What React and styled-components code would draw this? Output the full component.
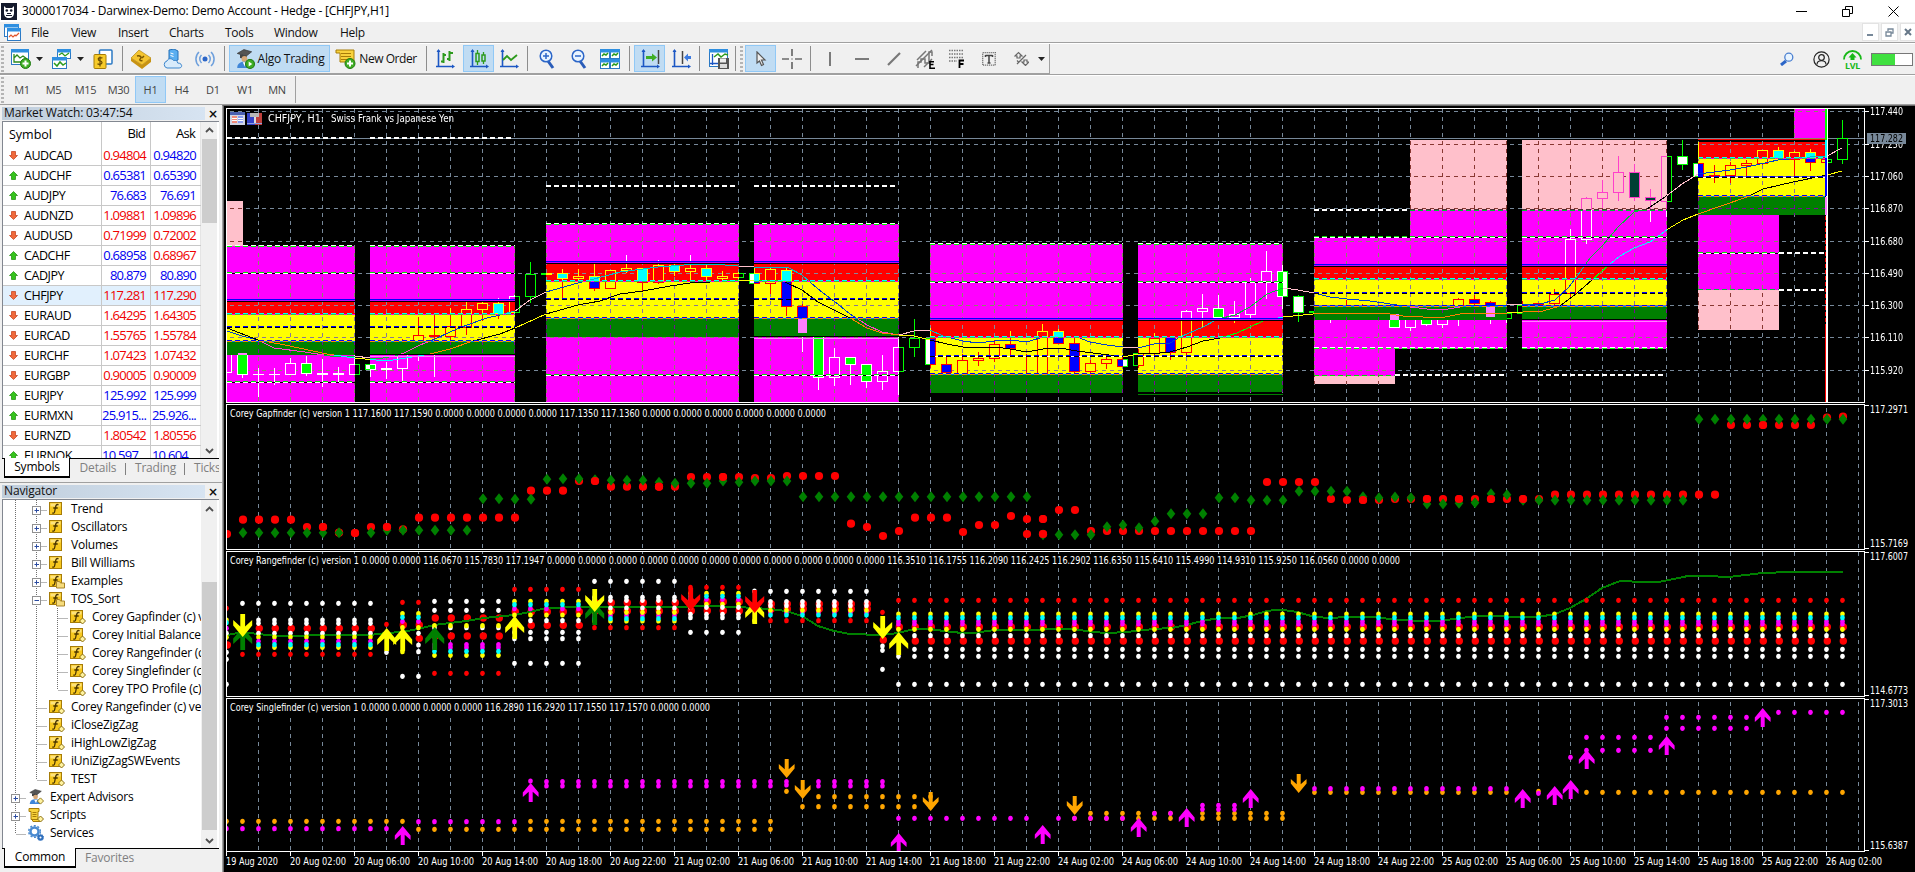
import React from 'react';
import styled, { createGlobalStyle, css } from 'styled-components';

const GlobalStyle = createGlobalStyle`
  html, body { margin: 0; padding: 0; background: #f0f0f0; overflow: hidden; }
  * { box-sizing: border-box; }
`;

const Shell = styled.div`
  width: 1915px;
  height: 872px;
  display: flex;
  flex-direction: column;
  background: #f0f0f0;
  color: #111;
  font-family: "Open Sans", "Noto Sans", sans-serif;
  font-size: 12px;
  overflow: hidden;
`;

/* ---------- window chrome ---------- */
const TitleBar = styled.div`
  height: 22px;
  flex: none;
  background: #fff;
  display: flex;
  align-items: center;
  padding-left: 1px;
`;
const TitleText = styled.div`
  margin-left: 5px;
  font-size: 12px;
  line-height: 20px;
  color: #000;
  letter-spacing: -0.22px;
  white-space: nowrap;
`;
const WindowControls = styled.div`
  margin-left: auto;
  display: flex;
  align-items: center;
  gap: 35px;
  padding-right: 16px;
  height: 18px;
`;
const MenuBar = styled.div`
  height: 21px;
  flex: none;
  display: flex;
  align-items: center;
  border-bottom: 1px solid #a0a0a0;
  padding-left: 3px;
`;
const MenuItem = styled.div`
  width: ${(p) => p.$w}px;
  line-height: 19px;
  white-space: nowrap;
  letter-spacing: -0.3px;
`;
const MdiControls = styled.div`
  margin-left: auto;
  display: flex;
  gap: 2px;
  height: 18px;
`;
const MdiButton = styled.div`
  width: 17px;
  height: 18px;
  background: #fff;
  border: 1px solid #e3e3e3;
  display: flex;
  align-items: center;
  justify-content: center;
  &:last-child { width: 15px; border-right: 0; }
`;
const Toolbar = styled.div`
  height: ${(p) => p.$h}px;
  flex: none;
  display: flex;
  align-items: ${(p) => (p.$top ? 'flex-start' : 'center')};
  border-top: 1px solid #fff;
  border-bottom: 1px solid #a0a0a0;
`;
const ToolGroup = styled.div`
  height: ${(p) => p.$h || 30}px;
  display: flex;
  align-items: center;
  border-right: 1px solid #a0a0a0;
  border-bottom: ${(p) => (p.$line ? '1px solid #a0a0a0' : '0')};
`;
const Grip = styled.div`
  width: 3px;
  height: 26px;
  flex: none;
  margin-left: ${(p) => p.$ml || 1}px;
  background: repeating-linear-gradient(#b4b4b4 0 2px, #f0f0f0 2px 4px);
`;
const Tool = styled.div`
  width: ${(p) => p.$w || 32}px;
  height: 27px;
  flex: none;
  display: flex;
  align-items: center;
  justify-content: center;
  margin-left: ${(p) => p.$ml || 0}px;
  gap: 3px;
  white-space: nowrap;
  letter-spacing: ${(p) => p.$ls || -0.25}px;
  ${(p) => p.$on && css`
    background: #c0dcf3;
    border: 1px solid #90c8f6;
  `}
`;
const Sep = styled.div`
  width: 1px;
  height: 25px;
  flex: none;
  margin-left: ${(p) => p.$ml || 0}px;
  background: #8d8d8d;
`;
const Period = styled(Tool)`
  color: #444;
  font-size: 11px;
`;
const Status = styled.div`
  margin-left: auto;
  display: flex;
  align-items: center;
  padding-right: 2px;
`;
const Battery = styled.div`
  width: 42px;
  height: 13px;
  margin-left: 9px;
  border: 1px solid #777;
  background: linear-gradient(90deg, #40e040 0 57%, #fff 57%);
`;

/* ---------- side panels ---------- */
const Body = styled.div`
  flex: 1;
  display: flex;
  min-height: 0;
`;
const Side = styled.div`
  width: 222px;
  flex: none;
  padding: 2px 0 0 2px;
  display: flex;
  flex-direction: column;
`;
const PanelHead = styled.div`
  width: 218px;
  height: ${(p) => p.$h}px;
  flex: none;
  display: flex;
  justify-content: space-between;
  align-items: flex-start;
`;
const PanelTitle = styled.div`
  width: 203px;
  height: 13px;
  line-height: 12px;
  padding-left: 2px;
  background: linear-gradient(90deg, #bfcddb, #d7e4f2);
  letter-spacing: -0.15px;
  white-space: nowrap;
`;
const CloseX = styled.div`
  width: 12px;
  font: bold 12px/14px "DejaVu Sans", sans-serif;
`;
const ListBox = styled.div`
  width: 217px;
  height: ${(p) => p.$h}px;
  flex: none;
  display: flex;
  background: #fff;
  border-left: 1px solid #828790;
  border-top: 1px solid #828790;
`;
const Rows = styled.div`
  width: 198px;
  height: 100%;
  overflow: hidden;
`;
const Scroll = styled.div`
  width: 16px;
  height: 100%;
  display: flex;
  flex-direction: column;
  align-items: center;
  justify-content: space-between;
  background: #f0f0f0;
  padding-top: ${(p) => p.$pt || 5}px;
  padding-bottom: 4px;
`;
const Thumb = styled.div`
  width: 15px;
  height: ${(p) => p.$h}px;
  margin-top: ${(p) => p.$mt}px;
  margin-bottom: auto;
  background: #cdcdcd;
`;
const QuoteRow = styled.div`
  display: grid;
  grid-template-columns: 99px 49px 50px;
  height: ${(p) => (p.$head ? 24 : 20)}px;
  line-height: ${(p) => (p.$head ? 23 : 19)}px;
  font-size: 13px;
  background: ${(p) => (p.$sel ? '#e1f0fd' : '#fff')};
  border-bottom: ${(p) => (p.$head ? '0' : '1px solid #c8c8c8')};
`;
const SymbolCell = styled.div`
  display: flex;
  align-items: center;
  padding-left: 6px;
  gap: 6px;
  border-right: 1px solid #c8c8c8;
  font-size: 12.5px;
  letter-spacing: ${(p) => (p.$head ? 0 : -0.45)}px;
  color: #000;
`;
const PriceCell = styled.div`
  text-align: right;
  padding-right: ${(p) => p.$pr || 4}px;
  border-right: 1px solid ${(p) => (p.$edge ? '#e5e5e5' : '#c8c8c8')};
  color: ${(p) => p.$c || '#000'};
  letter-spacing: -0.75px;
  white-space: nowrap;
`;
const Tabs = styled.div`
  width: 217px;
  height: 20px;
  flex: none;
  display: flex;
  overflow: hidden;
  font-size: 12px;
  letter-spacing: -0.2px;
  line-height: 18px;
  color: #808080;
`;
const Lead = styled.div`
  width: ${(p) => p.$w || 2}px;
  border-top: 1px solid #000;
  flex: ${(p) => (p.$grow ? 1 : 'none')};
`;
const Tab = styled.div`
  width: ${(p) => p.$w}px;
  flex: none;
  text-align: center;
  white-space: nowrap;
  overflow: hidden;
  ${(p) => p.$on ? css`
    background: #fff;
    color: #000;
    border: 1px solid #000;
    border-top: 0;
    border-bottom-width: 2px;
  ` : css`
    border-top: 1px solid #000;
    text-align: ${p.$cut ? 'left' : 'center'};
    padding-left: ${p.$cut ? 9 : 0}px;
    background: ${p.$bar ? 'linear-gradient(#808080,#808080) right center / 1px 12px no-repeat' : 'none'};
  `}
`;
const Splitter = styled.div`
  height: 7px;
  flex: none;
  margin-left: -2px;
  background: linear-gradient(#f0f0f0 4px, #a0a0a0 4px 5px, #f0f0f0 5px);
`;
const TreeRow = styled.div`
  height: 18px;
  display: flex;
  align-items: center;
  color: #000;
  white-space: nowrap;
  font-size: 12px;
  letter-spacing: -0.22px;
  > svg { flex: none; }
`;
const TreeLabel = styled.span`
  flex: none;
  margin: -1px 0 0 6px;
  line-height: 17px;
`;

/* ---------- chart ---------- */
const ChartWindow = styled.div`
  flex: 1;
  min-width: 0;
  display: flex;
  flex-direction: column;
  background: #000;
  border-left: 1px solid #a0a0a0;
  border-top: 1px solid #696969;
  box-shadow: inset 1px 0 0 #696969;
  padding-left: 1px;
`;
const Plot = styled.svg`
  display: block;
  width: 1691px;
  height: ${(p) => p.$h}px;
  flex: none;
  shape-rendering: crispEdges;
  font-family: "DejaVu Sans Condensed", "DejaVu Sans", sans-serif;
  font-size: 10.5px;
  isolation: isolate;
`;
const Difference = styled.g`
  mix-blend-mode: difference;
`;
const Smooth = styled.g`
  shape-rendering: geometricPrecision;
`;

const M = '#ff00ff', R = '#ff0000', Y = '#ffff00', G = '#008000', P = '#ffc0cb', SLATE = '#778899';
const bx = (i) => 226 + 16 * i;

const HGRID = [[111, '117.440'], [144, '117.250'], [176, '117.060'], [208, '116.870'], [241, '116.680'], [273, '116.490'], [305, '116.300'], [337, '116.110'], [370, '115.920']];

// high, top, bottom, low, falling
const CANDLES = [
  [350, 352, 372, 372, 0], [352, 352, 374, 377, 1], [368, 374, 374, 396, 0], [368, 374, 374, 384, 0], [358, 363, 374, 374, 0],
  [356, 363, 373, 375, 1], [359, 373, 374, 386, 0], [367, 373, 374, 382, 0], [355, 364, 374, 374, 0], [364, 364, 369, 376, 1],
  [362, 368, 369, 378, 0], [339, 345, 368, 382, 0], [317, 335, 352, 360, 0], [313, 335, 336, 376, 0], [308, 326, 336, 339, 0],
  [302, 309, 327, 334, 0], [302, 303, 309, 320, 0], [298, 303, 313, 318, 1], [295, 296, 312, 313, 0], [262, 274, 296, 302, 0],
  [274, 273, 274, 274, 0], [269, 273, 278, 297, 1], [269, 276, 278, 280, 0], [263, 276, 288, 290, 1], [270, 270, 288, 288, 0],
  [255, 268, 270, 272, 0], [268, 268, 282, 291, 1], [260, 265, 282, 283, 0], [264, 265, 271, 275, 1], [255, 268, 271, 281, 0],
  [264, 268, 276, 281, 1], [271, 276, 278, 281, 0], [272, 273, 277, 278, 0], [267, 273, 283, 283, 1], [267, 269, 283, 293, 0],
  [268, 270, 306, 315, 1], [304, 306, 333, 351, 1], [335, 335, 377, 389, 1], [348, 357, 377, 385, 0], [357, 357, 364, 384, 1],
  [364, 364, 381, 387, 1], [355, 371, 381, 389, 0], [334, 347, 371, 394, 0], [319, 338, 347, 356, 0], [328, 338, 364, 367, 1],
  [355, 364, 372, 374, 1], [354, 360, 374, 375, 0], [352, 358, 360, 365, 0], [340, 344, 358, 361, 0], [331, 344, 348, 355, 1],
  [354, 375, 378, 380, 0], [324, 331, 375, 375, 0], [329, 331, 343, 343, 1], [337, 343, 371, 374, 1], [360, 363, 371, 374, 0],
  [355, 359, 363, 368, 0], [355, 359, 366, 366, 1], [349, 353, 365, 367, 0], [333, 338, 353, 356, 0], [336, 337, 352, 359, 1],
  [310, 311, 352, 354, 0], [294, 308, 311, 327, 0], [295, 308, 317, 318, 1], [301, 314, 317, 322, 0], [278, 282, 314, 318, 0],
  [251, 271, 281, 298, 0], [265, 271, 296, 308, 1], [295, 296, 312, 321, 1], [311, 311, 312, 312, 1], [312, 314, 316, 322, 0],
  [300, 310, 314, 314, 0], [304, 309, 310, 311, 1], [310, 311, 313, 316, 0], [313, 313, 327, 327, 1], [316, 317, 327, 330, 0],
  [316, 319, 324, 325, 1], [316, 319, 324, 327, 0], [298, 299, 318, 325, 0], [295, 299, 303, 305, 1], [301, 302, 317, 323, 1],
  [312, 313, 318, 322, 0], [301, 305, 313, 313, 0], [303, 303, 304, 305, 0], [289, 294, 303, 306, 0], [229, 239, 293, 298, 0],
  [197, 198, 239, 243, 0], [180, 192, 198, 207, 0], [156, 172, 192, 200, 0], [164, 172, 197, 200, 1], [189, 197, 200, 221, 1],
  [156, 156, 201, 216, 0], [140, 156, 164, 169, 1], [163, 163, 176, 176, 1], [165, 175, 176, 182, 0], [162, 165, 175, 182, 0],
  [160, 163, 165, 177, 0], [150, 150, 163, 164, 0], [147, 150, 158, 159, 1], [151, 152, 159, 176, 0], [149, 152, 162, 170, 1],
  [159, 159, 162, 163, 0], [120, 138, 159, 163, 0],
];

const FAST = '227,331 242,336 258,340 274,348 305,352 330,356 355,356 370,358 383,358 395,356 404,353 420,345 435,339 450,332 467,325 487,318 500,315 515,311 530,300 546,292 578,283 590,280 620,272 658,267 697,264 712,264 738,266 754,267 787,267 802,275 818,289 834,301 850,314 867,325 882,332 899,335 914,331 930,330 943,336 963,341 978,343 995,341 1010,340 1027,342 1043,337 1060,337 1077,337 1090,342 1107,345 1123,347 1138,348 1154,344 1170,343 1180,337 1203,327 1218,319 1235,315 1250,307 1267,294 1283,288 1298,290 1314,293 1330,297 1347,299 1370,301 1397,305 1410,307 1427,309 1442,310 1460,307 1473,305 1507,305 1523,304 1540,304 1555,300 1569,287 1583,268 1590,258 1603,245 1618,227 1634,212 1647,209 1665,197 1682,184 1698,174 1730,170 1747,167 1778,160 1810,157 1827,156 1842,148';
const SLOW = '227,328 258,340 285,345 327,354 354,358 387,361 412,357 430,354 450,349 473,341 500,334 515,328 546,314 578,305 600,301 620,294 643,291 670,286 697,282 710,282 738,280 780,280 787,283 802,290 818,302 834,310 850,318 867,328 882,333 899,335 914,336 930,340 947,344 963,347 983,348 995,347 1010,349 1027,352 1043,349 1060,348 1077,351 1093,353 1117,356 1128,356 1138,354 1160,353 1170,352 1187,347 1203,341 1220,338 1237,333 1250,327 1263,321 1283,317 1313,314 1340,313 1383,313 1403,316 1423,317 1445,317 1460,314 1473,313 1507,313 1523,312 1543,311 1560,306 1577,293 1600,273 1610,264 1620,256 1634,248 1650,242 1668,229 1683,220 1698,214 1747,197 1763,189 1793,182 1827,175 1842,171';
const RANGE_MA = '227,635 243,632 258,634 277,636 338,635 370,635 386,633 402,632 418,629 434,625 466,621 484,618 514,615 530,612 546,608 578,607 674,607 706,606 738,607 770,609 786,611 802,616 818,626 834,631 850,634 882,635 898,633 914,629 930,629 944,631 962,633 978,632.5 994,630 1028,630 1058,629 1074,629 1092,632 1108,633 1127,632 1154,629 1171,628 1187,625 1202,621 1219,618 1238,618 1253,615 1267,611 1280,609.5 1297,612 1315,617 1330,618 1346,617 1377,617 1395,620 1413,620.5 1443,620.5 1476,616 1538,617 1555,614 1570,608 1586,599 1602,588 1620,581 1644,582 1659,582 1688,576 1707,576 1729,577 1762,573 1791,572 1843,572';

// [x1, x2, y1, y2, colour]
const ladder = (x1, x2, ys, cols) => cols.map((c, k) => [x1, x2, ys[k], ys[k + 1], c]);
const STD = [M, R, Y, G, M];
const A_Y = [246, 302, 314, 341, 355, 402], B_Y = [224, 263, 281, 318, 337, 402], C_Y = [244, 321, 337, 374, 393], D_Y = [237, 267, 279, 306, 320, 349];
const ZONES = [
  [227, 243, 201, 246, P],
  ...ladder(227, 355, A_Y, STD), ...ladder(370, 515, A_Y, STD),
  ...ladder(546, 739, B_Y, STD), ...ladder(754, 899, B_Y, STD),
  ...ladder(930, 1123, C_Y, [M, R, Y, G]), ...ladder(1138, 1283, [244, 321, 337, 374, 392], [M, R, Y, G]),
  [1410, 1507, 140, 210, P], [1410, 1507, 210, 237, M], [1522, 1667, 140, 210, P], [1522, 1667, 210, 237, M],
  ...ladder(1314, 1507, D_Y, STD), ...ladder(1522, 1667, D_Y, STD),
  [1314, 1395, 349, 376, M], [1314, 1395, 376, 384, P],
  [1698, 1825, 142, 158, R], [1698, 1825, 158, 197, Y], [1698, 1825, 197, 215, G],
  [1698, 1779, 215, 290, M], [1698, 1779, 290, 330, P], [1794, 1826, 109, 140, M],
];

const SPANS = { a: [[227, 355], [370, 515]], b: [[546, 739], [754, 899]], c: [[930, 1123], [1138, 1283]], d: [[1314, 1507], [1522, 1667]], e: [[1698, 1825]] };
const RULES = [
  ['a', 246, 'edge'], ['a', 273, 'mid'], ['a', 300, 'top'], ['a', 314, 'cyan'], ['a', 327, 'blue'], ['a', 341, 'low'], ['a', 382, 'mid'],
  ['b', 224, 'edge'], ['b', 262, 'top'], ['b', 281, 'cyan'], ['b', 299, 'blue'], ['b', 318, 'low'], ['b', 375, 'mid'],
  ['c', 244, 'edge'], ['c', 282, 'mid'], ['c', 319, 'top'], ['c', 337, 'cyan'], ['c', 356, 'blueWhite'], ['c', 374, 'low'],
  ['d', 237, 'mid'], ['d', 265, 'top'], ['d', 279, 'cyan'], ['d', 293, 'blue'], ['d', 306, 'low'], ['d', 348, 'edge'],
  ['e', 158, 'cyan'], ['e', 177, 'blueWhite'], ['e', 196, 'low'],
];
// each rule is a stack of 1px rows: [dy, base colour, dash colour]
const RULE_ROWS = {
  edge: [[-1, null, '#fff'], [0, null, '#00ff00']],
  mid: [[-1, null, '#00e000'], [0, '#000', '#fff']],
  top: [[-1, '#0000ff', null], [0, '#c000ff', null], [1, '#000', null]],
  cyan: [[-1, null, '#00ffff'], [0, '#ff00ff', '#40c040']],
  blue: [[-1, null, '#0000ff'], [0, null, '#000']],
  blueWhite: [[-1, null, '#0000ff'], [0, '#fff', '#000']],
  low: [[-1, null, '#0000ff'], [0, '#0080ff', '#ff9000']],
};
const WHITE_DASH = [[227, 353, 137], [370, 512, 137], [546, 736, 185], [754, 896, 185], [1314, 1408, 209], [1395, 1504, 374], [1522, 1664, 374], [1779, 1825, 252], [1779, 1825, 289]];

function Row({ x1, x2, y, color, dash, h = 1 }) {
  return <line x1={x1} x2={x2} y1={y + h / 2} y2={y + h / 2} stroke={color} strokeWidth={h} strokeDasharray={dash ? '5 3' : undefined} />;
}

function Frame({ top, bottom }) {
  return (
    <g fill="#fff">
      <rect x="226" y={top} width="1639" height="1" />
      <rect x="226" y={bottom} width="1639" height="1" />
      <rect x="226" y={top} width="1" height={bottom - top} />
      <rect x="1864" y={top} width="1" height={bottom - top} />
    </g>
  );
}
function VGrid({ top, bottom }) {
  return Array.from({ length: 51 }, (_, k) => (
    <line key={k} x1={258.5 + 32 * k} x2={258.5 + 32 * k} y1={top} y2={bottom} stroke={SLATE} strokeDasharray="4 4" />
  ));
}
function Label({ x, y, w, children, fill = '#fff' }) {
  return <text x={x} y={y} fill={fill} textLength={w} lengthAdjust="spacingAndGlyphs">{children}</text>;
}
function Candle({ i, d }) {
  const [hi, top, bot, lo, fall] = d;
  const x = bx(i);
  return (
    <g>
      <rect x={x} y={hi} width="1" height={lo - hi + 1} fill="#00ff00" />
      <rect x={x - 5} y={top} width="11" height={bot - top + 1} fill="#00ff00" />
      {bot - top > 1 && <rect x={x - 4} y={top + 1} width="9" height={bot - top - 1} fill={fall ? '#fff' : '#000'} />}
    </g>
  );
}

function PricePanel() {
  return (
    <Plot $h={297} viewBox="224 106 1691 297">
      <defs><clipPath id="price"><rect x="227" y="109" width="1637" height="293" /></clipPath></defs>
      <rect x="224" y="106" width="1691" height="297" fill="#000" />
      <g clipPath="url(#price)">
        <VGrid top={109} bottom={402} />
        {HGRID.map(([y]) => <line key={y} x1="226" x2="1864" y1={y + 0.5} y2={y + 0.5} stroke={SLATE} strokeDasharray="4 4" strokeDashoffset="4" />)}
        <rect x="227" y="138" width="1637" height="1" fill={SLATE} />
        {CANDLES.map((d, i) => <Candle key={i} i={i} d={d} />)}
        <polyline points={FAST} fill="none" stroke={P} />
        <polyline points={SLOW} fill="none" stroke={Y} />
      </g>
      <Difference>
        {ZONES.map(([x1, x2, y1, y2, c], k) => <rect key={k} x={x1} y={y1} width={x2 - x1} height={y2 - y1} fill={c} />)}
      </Difference>
      {RULES.map(([s, y, kind]) => SPANS[s].map(([x1, x2]) => RULE_ROWS[kind].map(([dy, base, dash]) => (
        <g key={`${s}${y}${x1}${dy}`}>
          {base && <Row x1={x1} x2={x2} y={y + dy} color={base} />}
          {dash && <Row x1={x1} x2={x2} y={y + dy} color={dash} dash />}
        </g>
      ))))}
      {WHITE_DASH.map(([x1, x2, y]) => <Row key={`${x1}-${y}`} x1={x1} x2={x2} y={y} color="#fff" dash h={2} />)}
      {[[1410, 1507], [1522, 1667]].map(([x1, x2]) => (
        <g key={x1}>
          <Row x1={x1} x2={x2} y={209} color="#4d3035" dash />
          <Row x1={x1} x2={x2} y={210} color="#00c034" dash />
        </g>
      ))}
      {[[370, 515, 354], [754, 899, 336], [1522, 1667, 319]].map(([x1, x2, y]) => (
        <g key={x1}><Row x1={x1} x2={x2} y={y} color="#000" /><Row x1={x1} x2={x2} y={y + 2} color="#ff80ff" /></g>
      ))}
      <Row x1={1138} x2={1283} y={394} color={G} />
      <Row x1={1314} x2={1395} y={375} color="#00e000" dash />
      <Row x1={1698} x2={1779} y={252} color="#00e000" dash />
      <Row x1={1698} x2={1779} y={253} color="#000" />
      <Row x1={1698} x2={1779} y={253} color="#fff" dash />
      <Row x1={1698} x2={1779} y={289} color="#00c034" dash />
      <Row x1={1698} x2={1825} y={139} color={R} />
      <rect x="1698" y="142" width="1" height="17" fill={Y} />
      <rect x="1826" y="109" width="2" height="293" fill="#fff" />
      <rect x="1825" y="109" width="2" height="31" fill="#00ff00" />
      <rect x="1825" y="140" width="2" height="18" fill="#00ffff" />
      <rect x="1825" y="158" width="2" height="38" fill="#0000ff" />
      <rect x="1825" y="197" width="2" height="18" fill="#ff80ff" />
      <line x1="1825.5" x2="1825.5" y1="216" y2="327" stroke={R} strokeDasharray="4 2" />
      <rect x="1825" y="327" width="1" height="75" fill={R} />
      <Frame top={108} bottom={402} />
      {HGRID.map(([y, t]) => (
        <g key={t}>
          <rect x="1865" y={y} width="4" height="1" fill="#fff" />
          <Label x={1870} y={y + 4} w={33}>{t}</Label>
        </g>
      ))}
      <rect x="1867" y="133" width="39" height="11" fill={SLATE} />
      <Label x={1870} y={142} w={33} fill="#000">117.282</Label>
      <g>
        <rect x="230" y="112" width="15" height="13" fill="#cfd4e4" />
        <rect x="230" y="112" width="15" height="3" fill="#4a5fb0" />
        <rect x="232" y="116" width="5" height="7" fill="#f08a7a" /><rect x="238" y="116" width="5" height="7" fill="#8a9cf0" />
        <path d="M232 118.5h5M232 120.5h5M238 118.5h5M238 120.5h5" stroke="#fff" />
        <rect x="247" y="113" width="8" height="12" fill="#3443c8" /><rect x="255" y="113" width="7" height="12" fill="#c0403c" />
        <rect x="250" y="113" width="9" height="4" fill="#b8b8b8" /><rect x="254" y="117" width="2" height="6" fill="#ddd" />
        <rect x="247" y="123" width="15" height="1" fill="#90a0e0" />
      </g>
      <Label x={268} y={122} w={56}>CHFJPY, H1:</Label>
      <Label x={331} y={122} w={123}>Swiss Frank vs Japanese Yen</Label>
    </Plot>
  );
}

/* expands [[from, to, value], ...] into [index, y] pairs; values are thirds of a pixel below the base line */
const runs = (base, list) => list.flatMap(([a, b, v]) => Array.from({ length: b - a + 1 }, (_, k) => [a + k, base + v / 3]));
const RED = runs(400, [[0, 0, 402], [1, 4, 359], [5, 6, 381], [7, 7, 398], [8, 8, 399], [9, 10, 381], [11, 11, 388], [12, 18, 353], [19, 21, 272], [22, 23, 243], [24, 28, 260], [29, 32, 231], [33, 34, 234], [35, 38, 228], [39, 39, 371], [40, 40, 381], [41, 41, 408], [42, 42, 393], [43, 45, 353], [46, 46, 396], [47, 48, 375], [49, 49, 348], [50, 51, 357], [50, 51, 402], [52, 53, 330], [54, 64, 393], [65, 68, 246], [69, 69, 297], [70, 72, 300], [73, 82, 297], [83, 93, 284], [94, 99, 75], [100, 100, 53], [101, 101, 50]]);
const GREEN = runs(400, [[1, 7, 398], [9, 9, 398], [10, 15, 391], [16, 17, 296], [18, 19, 298], [20, 20, 238], [21, 22, 236], [23, 23, 239], [24, 26, 241], [27, 27, 247], [28, 30, 250], [31, 31, 243], [32, 32, 247], [33, 35, 243], [36, 50, 290], [51, 54, 404], [55, 55, 380], [56, 56, 375], [57, 57, 383], [58, 58, 364], [59, 61, 341], [62, 63, 293], [64, 66, 301], [67, 70, 274], [71, 71, 290], [72, 72, 293], [73, 73, 291], [74, 74, 293], [75, 76, 312], [77, 77, 310], [78, 78, 308], [79, 79, 281], [80, 80, 284], [81, 91, 301], [92, 101, 58]]);
const RED_FRONT = new Set([6, 8, 10, 23, 27, 31, 51, 71, 75, 77, 79, 81, 96]);

const Ball = ({ i, y }) => <circle cx={bx(i) + 1} cy={y} r="4.1" fill={R} />;
const Gem = ({ i, y }) => { const x = bx(i) + 1; return <path d={`M${x} ${y - 5.5}L${x + 4.3} ${y}L${x} ${y + 5.5}L${x - 4.3} ${y}Z`} fill={G} />; };

const zeros = (n) => Array(n).fill('0.0000').join(' ');

function PanelTitleText({ y, w, children }) {
  return (
    <g>
      <rect x="228" y={y - 10} width={w + 4} height="14" fill="#000" />
      <Label x={230} y={y} w={w}>{children}</Label>
    </g>
  );
}
function AxisPair({ top, bottom, hi, lo }) {
  return (
    <g>
      <rect x="1865" y={top + 1} width="4" height="1" fill="#fff" /><rect x="1865" y={bottom - 1} width="4" height="1" fill="#fff" />
      <Label x={1870} y={top + 9} w={38}>{hi}</Label>
      <Label x={1870} y={bottom - 2} w={38}>{lo}</Label>
    </g>
  );
}

function GapPanel() {
  return (
    <Plot $h={147} viewBox="224 403 1691 147">
      <defs><clipPath id="gap"><rect x="227" y="405" width="1637" height="144" /></clipPath></defs>
      <g clipPath="url(#gap)">
        <VGrid top={408} bottom={549} />
        <Smooth>
          {RED.map(([i, y], k) => <Ball key={k} i={i} y={y} />)}
          {GREEN.map(([i, y], k) => <Gem key={k} i={i} y={y} />)}
          {RED.filter(([i]) => RED_FRONT.has(i)).map(([i, y], k) => <Ball key={k} i={i} y={y} />)}
        </Smooth>
        <PanelTitleText y={417} w={596}>{`Corey Gapfinder (c) version 1 117.1600 117.1590 ${zeros(4)} 117.1350 117.1360 ${zeros(6)}`}</PanelTitleText>
      </g>
      <Frame top={404} bottom={549} />
      <AxisPair top={404} bottom={549} hi="117.2971" lo="115.7169" />
    </Plot>
  );
}

const W = '#fff', C = '#00ffff';
// [from, to, [[y, colour, large]]] with y in thirds of a pixel below 400
const STACKS = [
  [0, 0, [[625, R], [660, Y], [668, C], [685, M], [700, W], [712, Y], [735, R, 1], [757, W], [778, W], [853, W]]],
  [1, 1, [[610, W], [763, R]]],
  [2, 9, [[610, W], [660, W], [685, R, 1], [670, W], [700, W], [711, Y], [724, M], [742, Y], [734, C], [763, R]]],
  [10, 10, [[673, R], [757, W]]],
  [11, 12, [[607, R], [641, Y], [675, R, 1], [664, M], [652, C], [683, Y]]],
  [11, 11, [[755, Y], [829, W]]],
  [12, 12, [[700, W], [715, R, 1], [735, W], [755, W], [829, W]]],
  [13, 17, [[497, W], [604, W], [631, W], [654, R, 1], [683, W], [677, Y], [708, R, 1], [734, M], [743, M], [766, Y], [754, C], [820, R]]],
  [18, 22, [[568, R], [604, Y], [635, R, 1], [626, M], [614, C], [645, Y], [662, W], [676, R, 1], [697, W], [716, W], [790, W]]],
  [23, 28, [[544, W], [608, R, 1], [592, W], [601, W], [633, R, 1], [624, W], [647, M], [637, Y], [663, Y], [656, C], [683, R]]],
  [29, 32, [[562, R], [580, Y], [605, R, 1], [598, M], [589, C], [632, R, 1], [613, Y], [622, W], [643, W], [653, W], [697, W]]],
  [33, 33, [[573, W], [662, Y]]],
  [34, 40, [[574, W], [612, R, 1], [627, R, 1], [605, W], [617, W], [638, M], [631, Y], [645, C], [662, R]]],
  [41, 41, [[637, R], [720, R, 1], [738, W], [751, W], [808, W]]],
  [42, 42, [[601, R], [642, Y], [681, R, 1], [664, M], [672, M], [653, C], [688, Y], [769, W], [853, W]]],
  [43, 101, [[601, R], [642, Y], [681, R, 1], [664, M], [672, M], [653, C], [688, Y], [707, W], [723, R, 1], [748, W], [769, W], [853, W]]],
];
const arrowPath = (s) => `M0 0L${9.5 * s} ${11.5 * s}V${17 * s}L${2.4 * s} ${10.5 * s}V${23 * s}H${-2.4 * s}V${10.5 * s}L${-9.5 * s} ${17 * s}V${11.5 * s}Z`;
const Arrow = ({ i, y, c, down, s = 1 }) => (
  <path d={arrowPath(s)} fill={c} transform={`translate(${bx(i) + 0.7} ${y}) scale(1 ${down ? -1 : 1})`} />
);
const Dot = ({ i, y, c }) => <ellipse cx={bx(i) + 0.5} cy={y} rx="2.3" ry="2.6" fill={c} />;

function RangePanel() {
  return (
    <Plot $h={147} viewBox="224 550 1691 147">
      <defs><clipPath id="range"><rect x="227" y="552" width="1637" height="144" /></clipPath></defs>
      <g clipPath="url(#range)">
        <VGrid top={552} bottom={696} />
        <Smooth>
          {STACKS.map(([a, b, dots]) => Array.from({ length: b - a + 1 }, (_, k) => dots.filter((d) => d[2]).map(([y, c], n) => (
            <circle key={`${a}-${k}-${n}`} cx={bx(a + k) + 1.3} cy={400 + y / 3} r="3.7" fill={c} />
          ))))}
        </Smooth>
        <polyline points={RANGE_MA} fill="none" stroke={G} strokeWidth="2" />
        <Smooth>
          {STACKS.map(([a, b, dots]) => Array.from({ length: b - a + 1 }, (_, k) => dots.filter((d) => !d[2]).map(([y, c], n) => (
            <Dot key={`${a}-${k}-${n}`} i={a + k} y={400 + y / 3} c={c} />
          ))))}
          <Arrow i={1} y={627} c={G} /><Arrow i={1} y={637} c={Y} down />
          <Arrow i={10} y={628} c={Y} /><Arrow i={11} y={628} c={Y} />
          <Arrow i={13} y={627} c={G} /><Arrow i={18} y={616} c={Y} />
          <Arrow i={23} y={602} c={G} /><Arrow i={23} y={612} c={Y} down />
          <Arrow i={29} y={611} c={R} down /><Arrow i={33} y={601} c={Y} /><Arrow i={33} y={613} c={R} down />
          <Arrow i={41} y={639} c={Y} down /><Arrow i={42} y={632} c={Y} />
        </Smooth>
        <PanelTitleText y={564} w={1170}>{`Corey Rangefinder (c) version 1 0.0000 0.0000 116.0670 115.7830 117.1947 ${zeros(11)} 116.3510 116.1755 116.2090 116.2425 116.2902 116.6350 115.6410 115.4990 114.9310 115.9250 116.0560 ${zeros(2)}`}</PanelTitleText>
      </g>
      <Frame top={551} bottom={696} />
      <AxisPair top={551} bottom={696} hi="117.6007" lo="114.6773" />
    </Plot>
  );
}

const O = '#ffa500';
const ORANGE = [
  ...runs(700, [[0, 11, 364], [12, 34, 388], [19, 34, 364], [35, 35, 274], [36, 36, 320], [37, 44, 290], [37, 44, 320]]),
  ...runs(700, [[53, 59, 355], [54, 60, 340], [61, 66, 355], [61, 66, 340], [68, 80, 277], [82, 82, 274], [85, 101, 277]]),
];
const MAGENTA = runs(700, [[0, 10, 386], [12, 18, 365], [19, 19, 243], [20, 34, 245], [20, 34, 258], [35, 35, 245], [35, 35, 255], [37, 41, 245], [37, 41, 258], [42, 50, 355], [52, 56, 355], [58, 59, 340], [61, 63, 316], [61, 63, 328], [68, 80, 266], [82, 82, 280], [84, 84, 172], [85, 89, 112], [85, 89, 151], [90, 95, 52], [90, 95, 85], [97, 101, 37]]);
const UPS = [[11, 826], [19, 783], [42, 833], [51, 825], [57, 818], [60, 808], [64, 789], [81, 789], [83, 786], [84, 780], [85, 750], [90, 736], [96, 708]];
const DOWNS = [[35, 778], [36, 799], [44, 811], [53, 815], [67, 793]];
const TIMES = ['19 Aug 2020', ...['20', '21', '24', '25'].flatMap((d) => ['02', '06', '10', '14', '18', '22'].map((h) => `${d} Aug ${h}:00`)), '26 Aug 02:00'];

function SinglePanel() {
  return (
    <Plot $h={175} viewBox="224 697 1691 175">
      <defs><clipPath id="single"><rect x="227" y="699" width="1637" height="152" /></clipPath></defs>
      <g clipPath="url(#single)">
        <VGrid top={702} bottom={850} />
        <Smooth>
          {ORANGE.map(([i, y], k) => <Dot key={k} i={i} y={y} c={O} />)}
          {MAGENTA.map(([i, y], k) => <Dot key={k} i={i} y={y} c={M} />)}
          {UPS.map(([i, y]) => <Arrow key={i} i={i} y={y} c={M} s={0.83} />)}
          {DOWNS.map(([i, y]) => <Arrow key={i} i={i} y={y} c={O} s={0.83} down />)}
        </Smooth>
        <PanelTitleText y={711} w={480}>{`Corey Singlefinder (c) version 1 ${zeros(4)} 116.2890 116.2920 117.1550 117.1570 ${zeros(2)}`}</PanelTitleText>
      </g>
      <Frame top={698} bottom={851} />
      <AxisPair top={698} bottom={851} hi="117.3013" lo="115.6387" />
      {TIMES.map((t, k) => (
        <g key={t}>
          <rect x={226 + 64 * k} y="852" width="1" height="4" fill="#fff" />
          <Label x={226 + 64 * k} y={865} w={k ? 56 : 52}>{t}</Label>
        </g>
      ))}
    </Plot>
  );
}

/* ---------- icons ---------- */
const Ico = ({ s = 20, h, vb, children }) => (
  <svg width={s} height={h || s} viewBox={vb || `0 0 ${s} ${h || s}`} fill="none">{children}</svg>
);
const Plus = ({ x = 14, y = 14 }) => (
  <g><circle cx={x} cy={y} r="5" fill="#3fae25" stroke="#1f7a10" /><path d={`M${x - 3} ${y}h6M${x} ${y - 3}v6`} stroke="#fff" strokeWidth="2" /></g>
);
const BlueWin = ({ x, y, w, h }) => (
  <g><rect x={x + 0.5} y={y + 0.5} width={w} height={h} fill="#fff" stroke="#2b79c4" /><rect x={x} y={y} width={w + 1} height="3.5" fill="#2f8fe0" /></g>
);
const Caret = () => <Ico s={7} h={4}><path d="M0 0h7L3.5 4z" fill="#222" /></Ico>;
const Axes = ({ children }) => (
  <Ico><path d="M3.5 1v17M1 17.5h17" stroke="#1c57c4" strokeWidth="1.6" /><path d="M3.5 0l2 3h-4zM20 17.5l-3-2v4z" fill="#1c57c4" />{children}</Ico>
);
const FnIcon = ({ kind }) => (
  <Ico s={16}>
    <rect x="0.5" y="1.5" width="12" height="12" fill="#f7c81e" stroke="#a67c08" />
    <rect x="1.5" y="2.5" width="10" height="3" fill="#fde27c" />
    <path d="M9.5 3.8c-2-.9-2.6.4-3 2.600L5.700 10.500c-.3 1.500-1 1.900-2.400 1.400M4.300 7h4.400" stroke="#4a3500" strokeWidth="1.300" />
    {kind === 'folder' && <path d="M7.500 8.500h3l1 1.500h4v5h-8z" fill="#f6dc7c" stroke="#a8842a" />}
    {kind === 'mod' && <path d="M12.500 9l3 3-3 3-3-3z" fill="#fff3a0" stroke="#8a6d10" />}
  </Ico>
);
const Grad = () => (
  <g>
    <path d="M2 4l6-3.500 7 2-5 4z" fill="#555" stroke="#333" strokeWidth=".6" /><path d="M4.500 5v3l6 1V6z" fill="#444" />
    <circle cx="8.500" cy="9" r="2.600" fill="#d8a878" /><path d="M2 17c0-4 3-5.500 6.500-5.500S14 13 14 17z" fill="#3f86d8" /><path d="M7 12l2 4 1.500-4z" fill="#fff" />
  </g>
);
const Move = ({ up }) => (
  <Ico s={9} h={9}>
    {up ? <path d="M4.500 0.500L8.500 4.500H6.500V8.500H2.500V4.500H0.500Z" fill="#35c41c" stroke="#1c8a0c" strokeWidth=".7" />
      : <path d="M4.500 8.500L8.500 4.500H6.500V0.500H2.500V4.500H0.500Z" fill="#f06a3c" stroke="#c23c18" strokeWidth=".7" />}
  </Ico>
);
const Chevron = ({ down }) => <Ico s={9} h={6}><path d={down ? 'M1 1l3.500 3.500L8 1' : 'M1 5l3.500-3.500L8 5'} stroke="#505050" strokeWidth="1.800" /></Ico>;
const Lens = ({ minus }) => (
  <Ico>
    <path d="M11 12l5 7" stroke="#2a5cb8" strokeWidth="3" /><circle cx="9" cy="7" r="5.800" fill="#e8f4ff" stroke="#2c66c8" strokeWidth="1.500" />
    <path d={minus ? 'M6 7h6' : 'M6 7h6M9 4v6'} stroke="#2c66c8" strokeWidth="1.500" />
  </Ico>
);

const MENU = [['File', 40], ['View', 47], ['Insert', 51], ['Charts', 56], ['Tools', 49], ['Window', 66], ['Help', 40]];
const PERIODS = [['M1', 32], ['M5', 31], ['M15', 33], ['M30', 33], ['H1', 31, 1], ['H4', 31], ['D1', 32], ['W1', 32], ['MN', 32]];
const r = 'r', b = 'b';
const QUOTES = [
  ['AUDCAD', 0, '0.94804', r, '0.94820', b], ['AUDCHF', 1, '0.65381', b, '0.65390', b], ['AUDJPY', 1, '76.683', b, '76.691', b], ['AUDNZD', 0, '1.09881', r, '1.09896', r],
  ['AUDUSD', 0, '0.71999', r, '0.72002', r], ['CADCHF', 1, '0.68958', b, '0.68967', r], ['CADJPY', 1, '80.879', b, '80.890', b], ['CHFJPY', 0, '117.281', r, '117.290', r],
  ['EURAUD', 0, '1.64295', r, '1.64305', r], ['EURCAD', 0, '1.55765', r, '1.55784', r], ['EURCHF', 0, '1.07423', r, '1.07432', r], ['EURGBP', 0, '0.90005', r, '0.90009', r],
  ['EURJPY', 1, '125.992', b, '125.999', b], ['EURMXN', 1, '25.915...', b, '25.926...', b], ['EURNZD', 0, '1.80542', r, '1.80556', r], ['EURNOK', 1, '10.597...', b, '10.604...', b],
];
const INK = { r: '#f00000', b: '#0000f0' };
const TREE = [
  [1, 'Trend', '+', 'fn'], [1, 'Oscillators', '+', 'fn'], [1, 'Volumes', '+', 'fn'], [1, 'Bill Williams', '+', 'fn'], [1, 'Examples', '+', 'folder'], [1, 'TOS_Sort', '-', 'folder'],
  [2, 'Corey Gapfinder (c) version', '', 'mod'], [2, 'Corey Initial Balance (c)', '', 'mod'], [2, 'Corey Rangefinder (c) version', '', 'mod'], [2, 'Corey Singlefinder (c) version', '', 'mod'], [2, 'Corey TPO Profile (c) version', '', 'mod', 1],
  [1, 'Corey Rangefinder (c) version', '', 'mod'], [1, 'iCloseZigZag', '', 'mod'], [1, 'iHighLowZigZag', '', 'mod'], [1, 'iUniZigZagSWEvents', '', 'mod'], [1, 'TEST', '', 'mod', 1],
  [0, 'Expert Advisors', '+', 'ea'], [0, 'Scripts', '+', 'script'], [0, 'Services', '', 'service', 1],
];

function Branches({ level, exp, last }) {
  const w = [25, 46, 67][level];
  const x = [12.5, 33.5, 54.5][level];
  return (
    <svg width={w} height="18" fill="none">
      <g stroke="#707070" strokeDasharray="1 1">
        {level > 0 && <path d="M12.500 0v18" />}
        {level > 1 && <path d="M33.500 0v18" />}
        <path d={`M${x} 0v${last ? 10 : 18}M${x + 1} 10.500h10`} />
      </g>
      {exp && <g><rect x={x - 4} y="6.500" width="8" height="8" fill="#fff" stroke="#919191" /><path d={`M${x - 2} 10.500h4.500${exp === '+' ? `M${x} 8.200v4.500` : ''}`} stroke="#2b4ba0" /></g>}
    </svg>
  );
}
function TreeIcon({ kind }) {
  if (kind === 'ea') return <Ico s={16} vb="0 0 18 18"><Grad /><path d="M14 10l3.500 3.500L14 17l-3.500-3.500z" fill="#fff3a0" stroke="#8a6d10" /></Ico>;
  if (kind === 'script') return <Ico s={16}><path d="M1 1.500h10v3h-1v8H3v-8H1z" fill="#f8d23c" stroke="#a67c08" /><path d="M4.500 5.500h4M4.500 7.500h4M4.500 9.500h4" stroke="#a67c08" /><path d="M4 12.500h8v2H5z" fill="#f8d23c" stroke="#a67c08" /><path d="M12.500 9l3 3-3 3-3-3z" fill="#fff3a0" stroke="#8a6d10" /></Ico>;
  if (kind === 'service') return <Ico s={16}><circle cx="6.500" cy="6.500" r="4" stroke="#4a8ad0" strokeWidth="2.500" /><circle cx="6.500" cy="6.500" r="5.800" stroke="#4a8ad0" strokeWidth="1.500" strokeDasharray="2 1.700" /><circle cx="12.500" cy="12.500" r="2" stroke="#2f6fbd" strokeWidth="2" /><circle cx="12.500" cy="12.500" r="3.200" stroke="#2f6fbd" strokeDasharray="1 1" /></Ico>;
  return <FnIcon kind={kind} />;
}

function MainToolbar() {
  return (
    <Toolbar $h={32}>
      <ToolGroup $line>
        <Grip />
        <Tool $w={20} $ml={7}><Ico><BlueWin x={0} y={0} w={17} h={15} /><path d="M3 5v8h9M3 9l3-3 3 3 3-2 4 3" stroke="#2c8a1c" strokeWidth="1.300" /><Plus x={14.500} y={14.500} /></Ico></Tool>
        <Tool $w={7} $ml={5}><Caret /></Tool>
        <Tool $w={20} $ml={9}><Ico><BlueWin x={5} y={0} w={13} h={9} /><path d="M7 6l3-2 3 3 4-3" stroke="#2c9a1c" strokeWidth="1.300" /><BlueWin x={0} y={8} w={14} h={11} /><path d="M2 14l3 3 3-4 3 3 3-2" stroke="#2c9a1c" strokeWidth="1.500" /></Ico></Tool>
        <Tool $w={7} $ml={5}><Caret /></Tool>
        <Tool $w={20} $ml={9}><Ico><rect x="6.500" y="1" width="12.500" height="14" rx="1" fill="#fff" stroke="#2b79c4" strokeWidth="1.500" /><rect x="1" y="5.500" width="12" height="14" rx="1" fill="#f7cb2a" stroke="#a67c08" /><path d="M9.500 9c-3-1.200-5 .2-4 2 1 1 3.500.8 3.500 2.500S6 16 4.500 14.800M7 7.500v10" stroke="#6a4c00" strokeWidth="1.200" /></Ico></Tool>
        <Sep $ml={9} />
        <Tool $w={20} $ml={8}><Ico><path d="M0 9l8-8 12 8-9 7z" fill="#f4c430" stroke="#a67c08" strokeWidth=".6" /><path d="M0 9l11 7v4L0 12zM20 9l-9 7v4l9-7z" fill="#c89312" /><path d="M6 7c3-1 5 1 3.500 2.500S9 12 11.500 11.500M13 7l-2 2" stroke="#7a5600" strokeWidth="1.500" /></Ico></Tool>
        <Tool $w={20} $ml={12}><Ico><path d="M6 1l5-1 4 2v9l-5 2-4-2z" fill="#5aaef0" stroke="#2470b8" /><path d="M7.500 4l3 1M7.500 6.500l3 1" stroke="#fff" /><path d="M4 19a3.600 3.600 0 0 1 0-7c1-3 5-3 6.500-.5 2.500-.5 4 .5 4.200 2.500 5 0 5 5 1.500 5z" fill="#d8ebfb" stroke="#3d86cc" /></Ico></Tool>
        <Tool $w={20} $ml={12}><Ico><circle cx="10" cy="10" r="2.500" fill="#2c66c8" /><path d="M6.500 6a5.500 5.500 0 0 0 0 8M13.500 6a5.500 5.500 0 0 1 0 8M4 3a9.500 9.500 0 0 0 0 14M16 3a9.500 9.500 0 0 1 0 14" stroke="#6d9fdc" strokeWidth="1.500" /></Ico></Tool>
        <Sep $ml={9} />
        <Tool $w={101} $ml={4} $on><Ico vb="0 0 18 18"><Grad /><circle cx="13.500" cy="13.500" r="4" fill="#3fae25" stroke="#1f7a10" /><path d="M12.300 11.300l3.200 2.200-3.200 2.200z" fill="#fff" /></Ico>Algo Trading</Tool>
        <Tool $w={86} $ml={3} $ls={-0.45}><Ico s={21} h={20}><path d="M1 1h18v12H5V4H1z" fill="#f8d23c" stroke="#a67c08" /><path d="M6 4.500h10M6 7.500h10M6 10.500h7" stroke="#a67c08" /><Plus x={15} y={14.500} /></Ico>New Order</Tool>
        <Sep $ml={7} />
        <Tool $w={20} $ml={8}><Axes><path d="M8.500 4v10M6 12.500h2.500M8.500 6H11M14.500 2v10M12 10h2.500M14.500 4H18" stroke="#2c9a1c" strokeWidth="2" /></Axes></Tool>
        <Tool $w={31} $ml={8} $on><Axes><path d="M8.500 1v3M8.500 13v3M14.500 3v3M14.500 12v3" stroke="#2c9a1c" strokeWidth="1.300" /><rect x="7" y="4.500" width="3" height="8" stroke="#2c9a1c" strokeWidth="1.500" /><rect x="13" y="6" width="3" height="6" stroke="#2c9a1c" strokeWidth="1.500" /></Axes></Tool>
        <Tool $w={20} $ml={5}><Axes><path d="M4 11l4-4 4 4 6-5" stroke="#2c9a1c" strokeWidth="1.800" /></Axes></Tool>
        <Sep $ml={8} />
        <Tool $w={20} $ml={9}><Lens /></Tool>
        <Tool $w={20} $ml={12}><Lens minus /></Tool>
        <Tool $w={20} $ml={11}><Ico>{[[0, 0], [10, 0], [0, 10], [10, 10]].map(([x, y]) => <g key={`${x}${y}`}><BlueWin x={x} y={y} w={9} h={9} /><path d={`M${x + 2} ${y + 7}l2-2 2 1 2-2`} stroke="#2c9a1c" strokeWidth="1.500" /></g>)}</Ico></Tool>
        <Sep $ml={9} />
        <Tool $w={31} $ml={4} $on><Axes><path d="M6 8.500h7" stroke="#3fae25" strokeWidth="3" /><path d="M12 4.500l5 4-5 4z" fill="#3fae25" /><path d="M18.500 1v14" stroke="#444" strokeWidth="1.500" /></Axes></Tool>
        <Tool $w={20} $ml={6}><Axes><path d="M11.500 2v13" stroke="#444" strokeWidth="1.500" /><path d="M20 8.500h-4" stroke="#3c7ae0" strokeWidth="3" /><path d="M17 4.500l-4 4 4 4z" fill="#3c7ae0" /></Axes></Tool>
        <Sep $ml={8} />
        <Tool $w={20} $ml={9}><Ico><BlueWin x={0} y={0} w={18} h={17} /><path d="M3.500 5v11M1 14.500h8" stroke="#1c57c4" strokeWidth="1.300" /><path d="M5 8l4-3 3 3 4-3 3 1" stroke="#2c9a1c" strokeWidth="1.500" /><rect x="9" y="9" width="11" height="11" fill="#555" /><rect x="11" y="9.500" width="6" height="4" fill="#eee" /><rect x="11" y="15" width="7" height="4" fill="#ddd" /></Ico></Tool>
        <Sep $ml={6} />
        <Grip $ml={4} />
        <Tool $w={31} $ml={2} $on><Ico s={12} h={16}><path d="M2 1l8 8H6.500l2 4.500-2 1-2-4.500L2 12z" fill="#eee" stroke="#555" strokeWidth="1.200" /></Ico></Tool>
        <Tool $w={20} $ml={6}><Ico><path d="M0 10h7M13 10h7M10 0v7M10 13v7M9.500 10h1" stroke="#6a6a6a" strokeWidth="1.700" /></Ico></Tool>
        <Sep $ml={8} />
        <Tool $w={32} $ml={3}><Ico s={4} h={14}><path d="M2 0v14" stroke="#666" strokeWidth="1.700" /></Ico></Tool>
        <Tool><Ico s={14} h={4}><path d="M0 2h14" stroke="#666" strokeWidth="1.700" /></Ico></Tool>
        <Tool $w={31}><Ico s={14}><path d="M1 13L13 1" stroke="#777" strokeWidth="2.200" /></Ico></Tool>
        <Tool><Ico><path d="M1 17L17 1M9 18l8-8M2 11L11 2" stroke="#777" strokeWidth="1.500" /><path d="M3 19v-6h3v-3h4v4h4V3h3v4" stroke="#777" strokeWidth="1.500" /><path d="M15 12v7.300h5M15 12.700h4M15 15.500h3.500" stroke="#000" strokeWidth="1.600" /></Ico></Tool>
        <Tool><Ico s={17} h={19}><path d="M0 1.500h14M0 5h14M0 8.500h14M0 12h8" stroke="#777" strokeWidth="1.500" strokeDasharray="1.500 1" /><path d="M10.500 19v-7.500h4.500M10.500 15h4" stroke="#000" strokeWidth="1.800" /></Ico></Tool>
        <Tool><Ico s={14}><rect x=".700" y=".700" width="12.500" height="12.500" stroke="#555" strokeDasharray="1 1" strokeWidth="1.300" /><path d="M3.500 3.500h7M7 3.500v8M5.500 11h3M3.500 3v2M10.500 3v2" stroke="#444" strokeWidth="1.500" /></Ico></Tool>
        <Tool><Ico s={15}><path d="M1 5l3.500-3.500L8 5H6v2H3V5zM8 11h2V9h3v2h2l-3.500 3.500zM3 13L12 4M3 9.500l2 2" stroke="#666" strokeWidth="1.200" /></Ico></Tool>
        <Tool $w={8}><Caret /></Tool>
        <Tool $w={4} />
      </ToolGroup>
      <Status>
        <Ico s={14}><path d="M1 13l5-4" stroke="#2c66c8" strokeWidth="3" /><circle cx="8.800" cy="5.200" r="4" fill="#e8f4ff" stroke="#4a7fd0" strokeWidth="1.300" /></Ico>
        <Tool $w={17} $ml={19}><Ico s={17}><circle cx="8.500" cy="8.500" r="7.600" stroke="#222" strokeWidth="1.200" /><circle cx="8.500" cy="6.500" r="2.800" stroke="#222" strokeWidth="1.200" /><path d="M4 13.500c0-5 9-5 9 0" stroke="#222" strokeWidth="1.200" /></Ico></Tool>
        <Tool $w={19} $ml={13}><Ico s={19}><path d="M1 9.500a8.500 8.500 0 0 1 17 0" stroke="#18b818" strokeWidth="1.800" /><path d="M9.500 3l4 4.500h-2v2.500h-4V7.500h-2z" fill="#18b818" /><text x="2" y="18.500" fontSize="8" fontWeight="bold" textLength="15" lengthAdjust="spacingAndGlyphs" fill="#18b818">LVL</text></Ico></Tool>
        <Battery />
      </Status>
    </Toolbar>
  );
}

function MarketWatch() {
  return (
    <>
      <PanelHead $h={14}><PanelTitle>Market Watch: 03:47:54</PanelTitle><CloseX>×</CloseX></PanelHead>
      <ListBox $h={337}>
        <Rows>
          <QuoteRow $head>
            <SymbolCell $head>Symbol</SymbolCell><PriceCell $pr={5}>Bid</PriceCell><PriceCell $pr={5} $edge>Ask</PriceCell>
          </QuoteRow>
          {QUOTES.map(([s, up, bid, c1, ask, c2]) => (
            <QuoteRow key={s} $sel={s === 'CHFJPY'}>
              <SymbolCell><Move up={up} />{s}</SymbolCell>
              <PriceCell $c={INK[c1]}>{bid}</PriceCell>
              <PriceCell $c={INK[c2]} $edge>{ask}</PriceCell>
            </QuoteRow>
          ))}
        </Rows>
        <Scroll><Chevron /><Thumb $h={84} $mt={6} /><Chevron down /></Scroll>
      </ListBox>
      <Tabs>
        <Lead /><Tab $w={66} $on>Symbols</Tab><Tab $w={56} $bar>Details</Tab><Tab $w={59} $bar>Trading</Tab><Tab $w={34} $cut>Ticks</Tab>
      </Tabs>
    </>
  );
}

function Navigator() {
  return (
    <>
      <PanelHead $h={14}><PanelTitle>Navigator</PanelTitle><CloseX>×</CloseX></PanelHead>
      <ListBox $h={349}>
        <Rows>
          {TREE.map(([level, name, exp, kind, last]) => (
            <TreeRow key={level + name}>
              <Branches level={level} exp={exp} last={last} />
              <TreeIcon kind={kind} />
              <TreeLabel>{name}</TreeLabel>
            </TreeRow>
          ))}
        </Rows>
        <Scroll $pt={6}><Chevron /><Thumb $h={248} $mt={70} /><Chevron down /></Scroll>
      </ListBox>
      <Tabs>
        <Lead /><Tab $w={72} $on>Common</Tab><Tab $w={67}>Favorites</Tab><Lead $grow />
      </Tabs>
    </>
  );
}

export default function App() {
  return (
    <Shell>
      <GlobalStyle />
      <TitleBar>
        <Ico s={16} h={17}><rect width="16" height="17" fill="#141a2c" /><path d="M3 3l2 2h6l2-2v7c0 3-2 5-5 5s-5-2-5-5z" fill="#fff" /><circle cx="5.800" cy="7.500" r="1.300" fill="#141a2c" /><circle cx="10.200" cy="7.500" r="1.300" fill="#141a2c" /><path d="M5 12.500h6M6 10.500h4" stroke="#141a2c" /></Ico>
        <TitleText>3000017034 - Darwinex-Demo: Demo Account - Hedge - [CHFJPY,H1]</TitleText>
        <WindowControls>
          <Ico s={11}><path d="M0 5.500h11" stroke="#000" /></Ico>
          <Ico s={11}><path d="M.500 3.500h7v7h-7zM3.500 3.500v-3h7v7h-3" stroke="#000" /></Ico>
          <Ico s={11}><path d="M.500 .500l10 10M10.500 .500l-10 10" stroke="#000" /></Ico>
        </WindowControls>
      </TitleBar>
      <MenuBar>
        <Tool $w={18}><Ico s={17}><BlueWin x={0} y={0} w={14} h={12} /><BlueWin x={3} y={4} w={13} h={12} /><path d="M5 13l2-2 2 2 2-2 1 1 3-3" stroke="#e0562c" strokeWidth="1.200" /></Ico></Tool>
        <Tool $w={10} />
        {MENU.map(([t, w]) => <MenuItem key={t} $w={w}>{t}</MenuItem>)}
        <MdiControls>
          <MdiButton><Ico s={7}><path d="M0 6h6" stroke="#778899" strokeWidth="2" /></Ico></MdiButton>
          <MdiButton><Ico s={9}><path d="M3 3V1h5v4H6.500M1 4h5v4H1z" stroke="#778899" strokeWidth="1.300" /></Ico></MdiButton>
          <MdiButton><Ico s={8}><path d="M1 1l6 6M7 1L1 7" stroke="#667788" strokeWidth="2" /></Ico></MdiButton>
        </MdiControls>
      </MenuBar>
      <MainToolbar />
      <Toolbar $h={30} $top>
        <ToolGroup $h={27}>
          <Grip />
          {PERIODS.map(([t, w, on]) => <Period key={t} $w={w} $on={on} $ml={t === 'M1' ? 2 : 0}>{t}</Period>)}
          <Tool $w={2} />
        </ToolGroup>
      </Toolbar>
      <Body>
        <Side>
          <MarketWatch />
          <Splitter />
          <Navigator />
        </Side>
        <ChartWindow>
          <PricePanel />
          <GapPanel />
          <RangePanel />
          <SinglePanel />
        </ChartWindow>
      </Body>
    </Shell>
  );
}
